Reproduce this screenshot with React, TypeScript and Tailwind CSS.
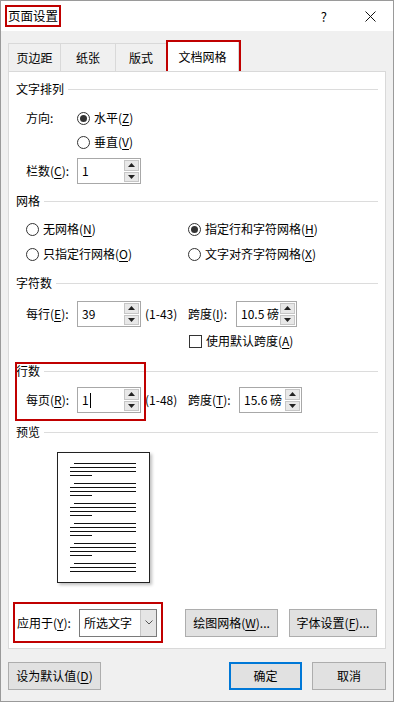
import React from "react";

const FONT = '"Noto Sans CJK SC", "Microsoft YaHei", sans-serif';

function U({ children }: { children: React.ReactNode }) {
  return <span className="underline underline-offset-[2px]">{children}</span>;
}

function SectionHeader({ title }: { title: string }) {
  return (
    <div className="flex h-[18px] items-center pl-[7px] pr-[7px]">
      <span>{title}</span>
      <div className="ml-[4px] h-px flex-1 bg-[#dcdcdc]" />
    </div>
  );
}

function Radio({ checked }: { checked?: boolean }) {
  return (
    <span className="flex h-[13px] w-[13px] shrink-0 items-center justify-center rounded-full border border-[#333]">
      {checked && <span className="h-[7px] w-[7px] rounded-full bg-[#333]" />}
    </span>
  );
}

function Spin({ value, className, caret }: { value: string; className: string; caret?: boolean }) {
  return (
    <div className={"flex h-[26px] border border-[#a8a8a8] bg-white " + className}>
      <div className="flex flex-1 items-center pl-[4px]">
        {value}
        {caret && <span className="ml-[1px] h-[15px] w-px bg-black" />}
      </div>
      <div className="flex w-[17px] flex-col gap-[1px] p-[1px]">
        <div className="flex flex-1 items-center justify-center border border-[#c6c6c6] bg-[#e8e8e8]">
          <svg width="7" height="4" viewBox="0 0 7 4">
            <path d="M0 4 L3.5 0 L7 4 Z" fill="#222" />
          </svg>
        </div>
        <div className="flex flex-1 items-center justify-center border border-[#c6c6c6] bg-[#e8e8e8]">
          <svg width="7" height="4" viewBox="0 0 7 4">
            <path d="M0 0 L3.5 4 L7 0 Z" fill="#222" />
          </svg>
        </div>
      </div>
    </div>
  );
}

function PreviewPage() {
  const groups = [4, 4, 4, 4, 4, 3];
  return (
    <div className="ml-[48px] h-[131px] w-[93px] border border-[#222] bg-white shadow-[2px_2px_3px_rgba(0,0,0,0.25)]">
      <div className="flex flex-col gap-[7px] pl-[12px] pt-[10px]">
        {groups.map((n, gi) => (
          <div key={gi} className="flex flex-col gap-[3px]">
            {Array.from({ length: n }).map((_, i) => (
              <div
                key={i}
                className={
                  "h-px shrink-0 bg-[#111] " +
                  (i === 0 ? "ml-[4px] w-[62px]" : i === 3 ? "w-[22px]" : "w-[66px]")
                }
              />
            ))}
          </div>
        ))}
      </div>
    </div>
  );
}

function Btn({ children, className }: { children: React.ReactNode; className: string }) {
  return (
    <div className={"flex h-[28px] items-center justify-center border border-[#adadad] bg-[#e1e1e1] " + className}>
      {children}
    </div>
  );
}

export default function App() {
  return (
    <div
      className="flex h-[702px] w-[394px] flex-col border border-[#9a9a9a] bg-[#f0f0f0] text-[12px] leading-none text-black"
      style={{ fontFamily: FONT }}
    >
      {/* Title bar */}
      <div className="flex h-[30px] shrink-0 items-center bg-white">
        <span className="ml-[4px] flex h-[22px] items-center border-2 border-[#c00000] px-[1px] text-[12.5px]">
          页面设置
        </span>
        <span className="ml-auto mr-[38px] text-[13px]">?</span>
        <svg className="mr-[17px]" width="11" height="11" viewBox="0 0 11 11">
          <path d="M0.5 0.5 L10.5 10.5 M10.5 0.5 L0.5 10.5" stroke="#111" strokeWidth="1" />
        </svg>
      </div>

      {/* Tabs */}
      <div className="mt-[9px] flex h-[31px] items-end pl-[7px]">
        <div className="flex h-[28px] w-[53px] items-center justify-center border border-b-0 border-[#d9d9d9]">页边距</div>
        <div className="flex h-[28px] w-[55px] items-center justify-center border border-b-0 border-l-0 border-[#d9d9d9]">纸张</div>
        <div className="flex h-[28px] w-[51px] items-center justify-center border border-b-0 border-l-0 border-[#d9d9d9]">版式</div>
        <div className="relative flex h-[30px] w-[72px] items-center justify-center border border-b-0 border-l-0 border-[#d9d9d9] bg-white">
          文档网格
          <div className="absolute -left-[1px] -top-[2px] h-[34px] w-[75px] border-2 border-[#c00000]" />
        </div>
      </div>

      {/* Panel */}
      <div className="relative mx-[7px] flex h-[578px] flex-col border border-[#d9d9d9] bg-white">
        <div className="mt-[8px]">
          <SectionHeader title="文字排列" />
        </div>
        <div className="mt-[10px] flex h-[20px] items-center pl-[17px]">
          <span className="w-[51px]">方向:</span>
          <Radio checked />
          <span className="ml-[4px]">
            水平(<U>Z</U>)
          </span>
        </div>
        <div className="mt-[4px] flex h-[20px] items-center pl-[68px]">
          <Radio />
          <span className="ml-[4px]">
            垂直(<U>V</U>)
          </span>
        </div>
        <div className="mt-[6px] flex h-[26px] items-center pl-[17px]">
          <span className="w-[51px]">
            栏数(<U>C</U>):
          </span>
          <Spin value="1" className="w-[64px]" />
        </div>

        <div className="mt-[8px]">
          <SectionHeader title="网格" />
        </div>
        <div className="mt-[9px] flex h-[20px] items-center pl-[17px]">
          <div className="flex w-[162px] items-center">
            <Radio />
            <span className="ml-[4px]">
              无网格(<U>N</U>)
            </span>
          </div>
          <Radio checked />
          <span className="ml-[4px]">
            指定行和字符网格(<U>H</U>)
          </span>
        </div>
        <div className="mt-[5px] flex h-[20px] items-center pl-[17px]">
          <div className="flex w-[162px] items-center">
            <Radio />
            <span className="ml-[4px]">
              只指定行网格(<U>O</U>)
            </span>
          </div>
          <Radio />
          <span className="ml-[4px]">
            文字对齐字符网格(<U>X</U>)
          </span>
        </div>

        <div className="mt-[10px]">
          <SectionHeader title="字符数" />
        </div>
        <div className="mt-[9px] flex h-[26px] items-center pl-[17px]">
          <span className="w-[51px]">
            每行(<U>E</U>):
          </span>
          <Spin value="39" className="w-[64px]" />
          <span className="w-[47px] pl-[4px]">(1-43)</span>
          <span className="w-[48px]">
            跨度(<U>I</U>):
          </span>
          <Spin value="10.5 磅" className="w-[61px]" />
        </div>
        <div className="mt-[4px] flex h-[20px] items-center pl-[180px]">
          <span className="h-[13px] w-[13px] border border-[#333]" />
          <span className="ml-[4px]">
            使用默认跨度(<U>A</U>)
          </span>
        </div>

        <div className="mt-[11px]">
          <SectionHeader title="行数" />
        </div>
        <div className="mt-[7px] flex h-[26px] items-center pl-[17px]">
          <span className="w-[51px]">
            每页(<U>R</U>):
          </span>
          <Spin value="1" caret className="w-[64px]" />
          <span className="w-[47px] pl-[4px]">(1-48)</span>
          <span className="w-[51px]">
            跨度(<U>T</U>):
          </span>
          <Spin value="15.6 磅" className="w-[63px]" />
        </div>
        {/* highlight around 行数 */}
        <div className="absolute left-[6px] top-[290px] h-[59px] w-[131px] border-2 border-[#c00000]" />

        <div className="mt-[10px]">
          <SectionHeader title="预览" />
        </div>
        <div className="mt-[11px]">
          <PreviewPage />
        </div>

        <div className="mt-[19px] flex items-center">
          <div className="ml-[4px] flex h-[41px] w-[150px] items-center border-2 border-[#c00000] pl-[2px]">
            <span className="w-[62px]">
              应用于(<U>Y</U>):
            </span>
            <div className="flex h-[28px] w-[78px] border border-[#7a7a7a] bg-white">
              <div className="flex flex-1 items-center pl-[4px]">所选文字</div>
              <div className="flex w-[16px] items-center justify-center border-l border-[#c6c6c6] bg-[#e5e5e5]">
                <svg width="8" height="5" viewBox="0 0 8 5">
                  <path d="M0.5 0.5 L4 4 L7.5 0.5" fill="none" stroke="#555" strokeWidth="1" />
                </svg>
              </div>
            </div>
          </div>
          <Btn className="ml-[22px] w-[93px]">
            绘图网格(<U>W</U>)...
          </Btn>
          <Btn className="ml-[11px] w-[88px]">
            字体设置(<U>F</U>)...
          </Btn>
        </div>
      </div>

      {/* Bottom buttons */}
      <div className="mt-[13px] flex items-center px-[7px]">
        <Btn className="w-[93px]">
          设为默认值(<U>D</U>)
        </Btn>
        <div className="ml-auto flex h-[28px] w-[73px] items-center justify-center border-2 border-[#0078d7] bg-[#e1e1e1]">
          确定
        </div>
        <Btn className="ml-[10px] w-[74px]">取消</Btn>
      </div>
    </div>
  );
}
